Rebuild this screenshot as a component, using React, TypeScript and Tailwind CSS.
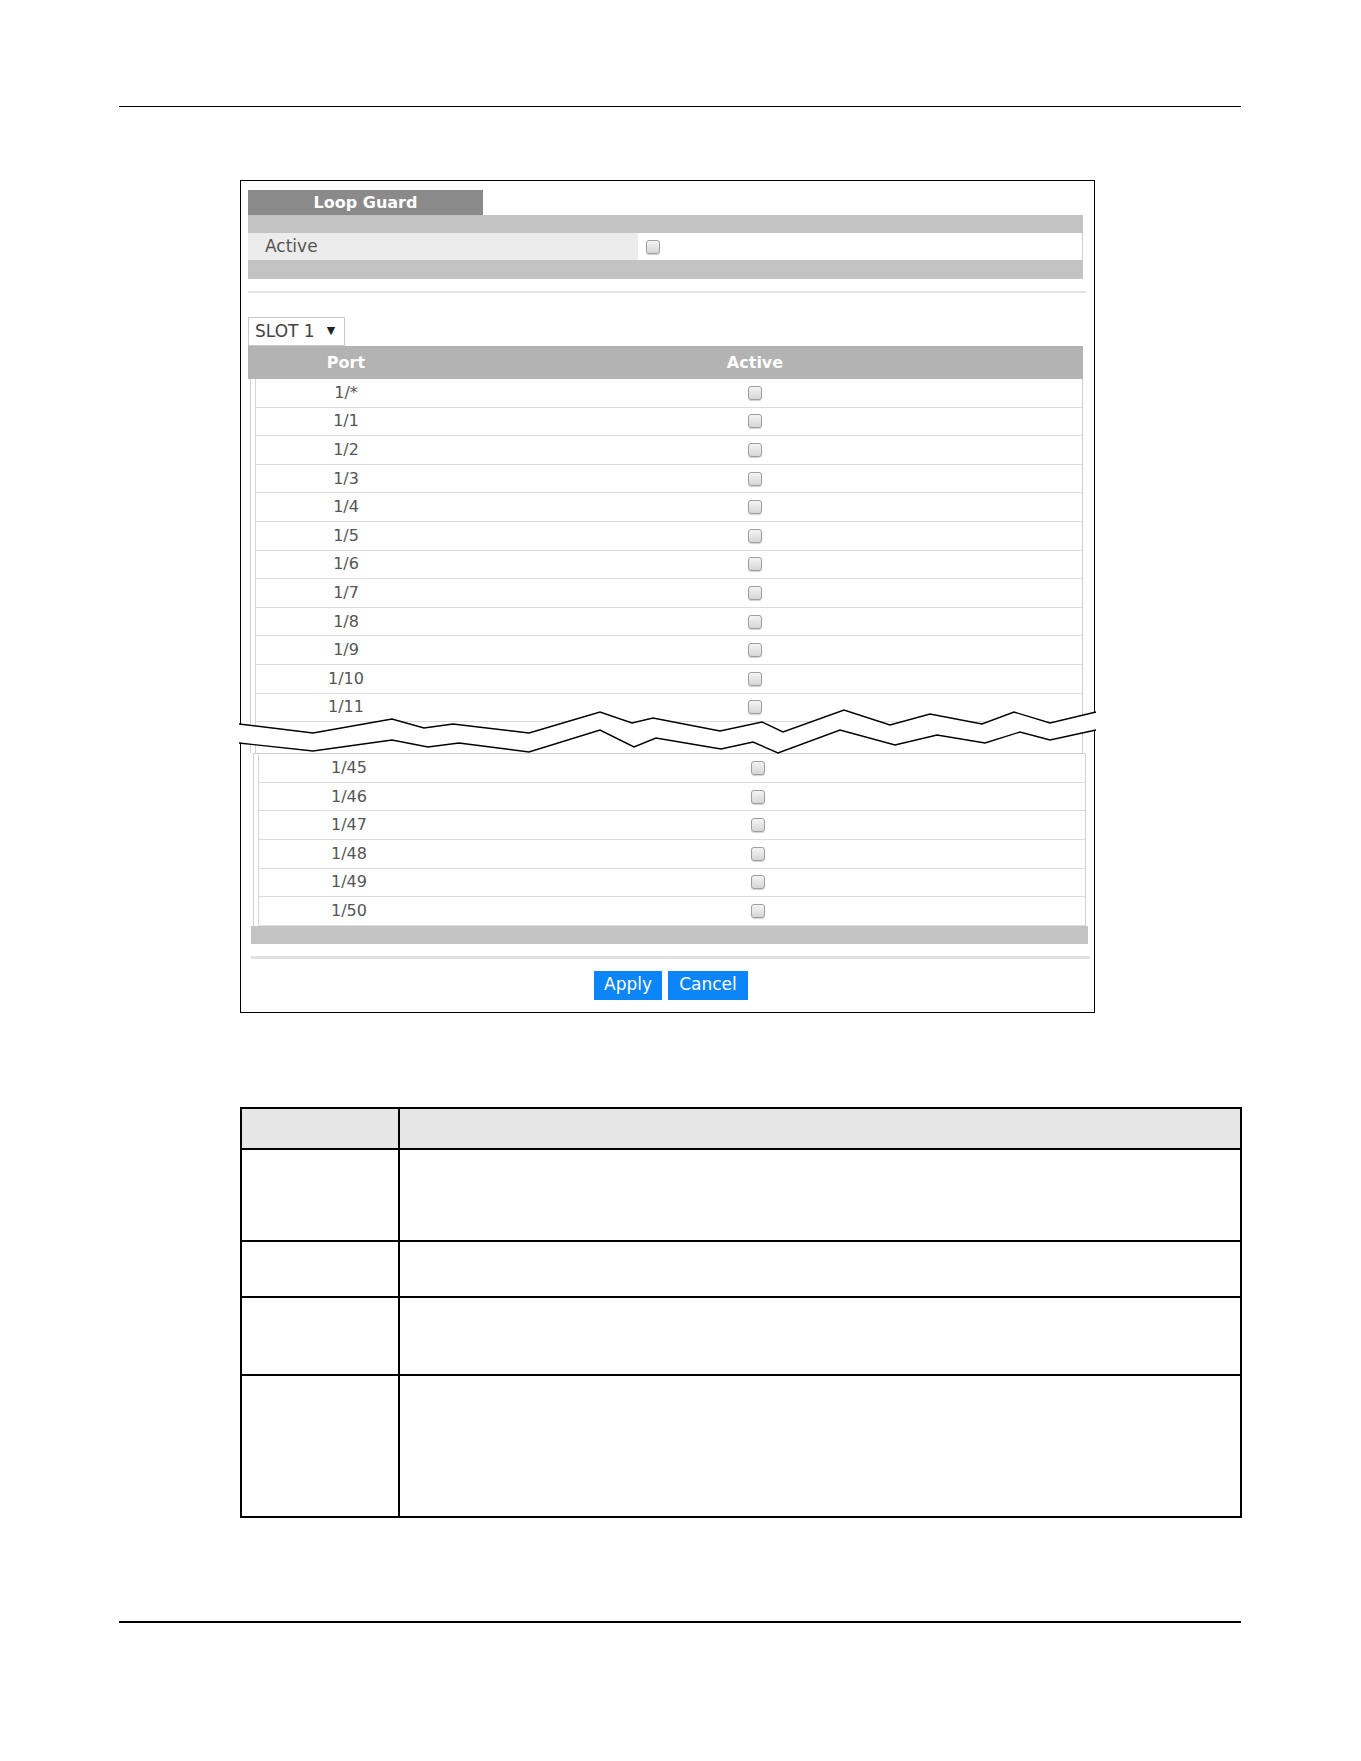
import React from "react";

const upperPorts = ["1/*", "1/1", "1/2", "1/3", "1/4", "1/5", "1/6", "1/7", "1/8", "1/9", "1/10", "1/11"];
const lowerPorts = ["1/45", "1/46", "1/47", "1/48", "1/49", "1/50"];

// zigzag "cut" drawn across the port list, in page coordinates
const cutTop: [number, number][] = [
  [238, 723], [312, 732], [391, 718], [423, 727], [452, 723], [528, 732], [599, 711],
  [631, 722], [652, 717], [719, 730], [761, 721], [782, 731], [843, 709], [889, 724],
  [929, 713], [981, 723], [1013, 711], [1049, 722], [1095, 711],
];
const cutBottom: [number, number][] = [
  [238, 742], [312, 750], [391, 739], [427, 746], [458, 742], [528, 751], [599, 729],
  [633, 746], [655, 737], [720, 748], [752, 741], [777, 752], [839, 729], [894, 744],
  [936, 734], [984, 742], [1019, 731], [1049, 739], [1095, 729],
];

const pts = (list: [number, number][]) => list.map(([x, y]) => `${x},${y}`).join(" ");

function Checkbox() {
  return (
    <span className="inline-block w-[14px] h-[14px] rounded-[3px] border border-[#9e9e9e] bg-linear-to-b from-[#f4f4f4] to-[#d6d6d6] shadow-[0_1px_1px_rgba(0,0,0,0.18)]" />
  );
}

function PortRow({ port }: { port: string }) {
  return (
    <div className="grid grid-cols-[180px_638px_1fr] h-[28.6px] items-center border-b border-[#dcdcdc] text-[16px] text-[#555]">
      <div className="text-center">{port}</div>
      <div className="flex justify-center">
        <Checkbox />
      </div>
      <div />
    </div>
  );
}

function BreakMark() {
  return (
    <svg
      className="absolute left-[-4px] top-[520px]"
      width="862"
      height="60"
      viewBox="236 700 862 60"
    >
      <polygon points={pts([...cutTop, ...[...cutBottom].reverse()])} fill="#fff" />
      <polyline points={pts(cutTop)} fill="none" stroke="#000" strokeWidth="1.4" />
      <polyline points={pts(cutBottom)} fill="none" stroke="#000" strokeWidth="1.4" />
    </svg>
  );
}

function LoopGuardPanel() {
  return (
    <div className="relative ml-[240px] mt-[73px] w-[855px] border border-black pt-[9px] pl-[7px] pb-[12px]">
      <div className="w-[235px] h-[25px] bg-[#8a8a8a] flex items-center justify-center text-white font-bold text-[16px]">
        Loop Guard
      </div>
      <div className="w-[835px] h-[18px] bg-[#c3c3c3]" />
      <div className="w-[835px] h-[27px] flex">
        <div className="w-[390px] bg-[#ececec] flex items-center pl-[17px] text-[17px] text-[#555]">Active</div>
        <div className="flex-1 bg-white border-r border-[#cfcfcf] flex items-center pl-[8px]">
          <Checkbox />
        </div>
      </div>
      <div className="w-[835px] h-[19px] bg-[#c3c3c3]" />
      <div className="mt-[12px] w-[838px] h-[2px] bg-[#e3e3e3]" />

      <div className="mt-[24px] w-[97px] h-[29px] border border-[#c9c9c9] flex items-center pl-[6px] text-[17px] text-[#444]">
        SLOT 1<span className="ml-[12px] text-[11px] text-[#222]">▼</span>
      </div>

      <div className="w-[835px] h-[33px] bg-[#b3b3b3] pl-[8px] grid grid-cols-[180px_638px_1fr] items-center text-white font-bold text-[16px]">
        <div className="text-center">Port</div>
        <div className="text-center">Active</div>
        <div />
      </div>
      <div className="ml-[2px] w-[833px] border-l border-r border-[#cfcfcf]">
        <div className="ml-[4px] border-l border-[#d6d6d6]">
          {upperPorts.map((p) => (
            <PortRow key={p} port={p} />
          ))}
          <div className="h-[31px]" />
        </div>
      </div>

      <div className="ml-[3px]">
        <div className="ml-[2px] w-[833px] border-l border-r border-t border-[#cfcfcf]">
          <div className="ml-[4px] border-l border-[#d6d6d6]">
            {lowerPorts.map((p) => (
              <PortRow key={p} port={p} />
            ))}
          </div>
        </div>
        <div className="w-[837px] h-[18px] bg-[#c3c3c3]" />
        <div className="mt-[12px] w-[839px] h-[3px] bg-[#e2e2e2]" />
        <div className="mt-[12px] w-[840px] flex justify-center gap-[6px]">
          <button className="w-[68px] h-[29px] bg-[#0b85f8] text-white text-[17px]">Apply</button>
          <button className="w-[80px] h-[29px] bg-[#0b85f8] text-white text-[17px]">Cancel</button>
        </div>
      </div>

      <BreakMark />
    </div>
  );
}

function FieldTable() {
  const rows = ["h-[92px]", "h-[56px]", "h-[78px]"];
  return (
    <div className="ml-[240px] mt-[94px] w-[1002px] border-2 border-black">
      <div className="grid grid-cols-[158px_1fr] h-[41px] bg-[#e6e6e6] border-b-2 border-black">
        <div className="border-r-2 border-black" />
        <div />
      </div>
      {rows.map((h, i) => (
        <div key={i} className={`grid grid-cols-[158px_1fr] border-b-2 border-black ${h}`}>
          <div className="border-r-2 border-black" />
          <div />
        </div>
      ))}
      <div className="grid grid-cols-[158px_1fr] h-[140px]">
        <div className="border-r-2 border-black" />
        <div />
      </div>
    </div>
  );
}

export default function App() {
  return (
    <div className="w-[1361px] min-h-[1761px] bg-white font-['DejaVu_Sans',sans-serif]">
      <div className="pt-[106px] pl-[119px]">
        <div className="w-[1122px] h-px bg-black" />
      </div>
      <LoopGuardPanel />
      <FieldTable />
      <div className="mt-[103px] ml-[119px] w-[1122px] h-[2px] bg-black" />
      <div className="mt-[139px] w-[1196px] h-px bg-[#333]" />
    </div>
  );
}
